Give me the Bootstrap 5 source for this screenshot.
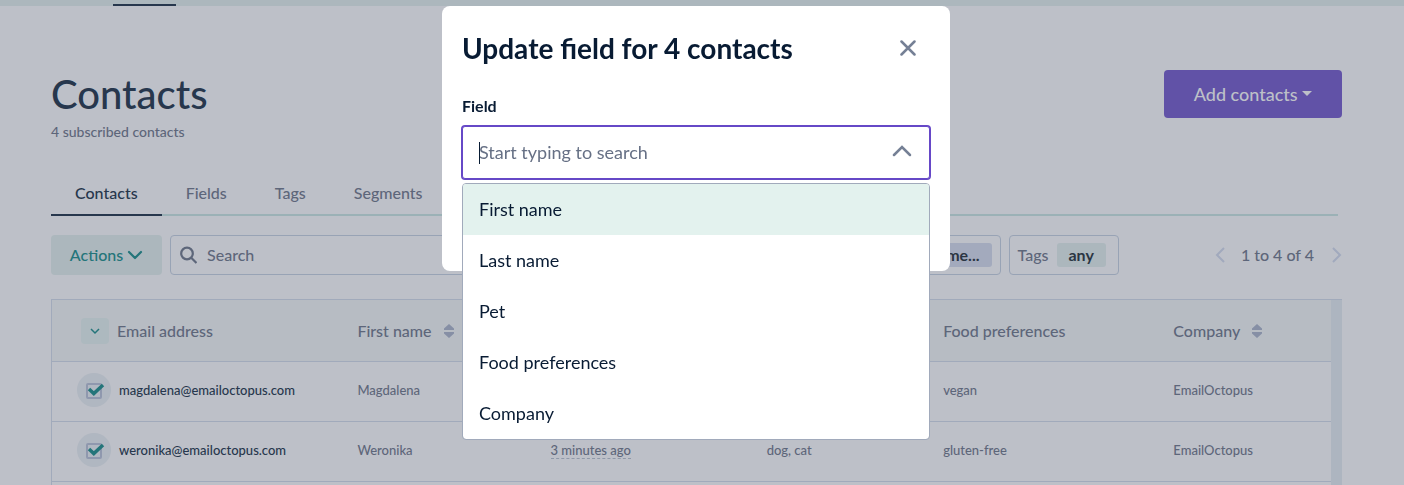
<!DOCTYPE html>
<html lang="en">
<head>
<meta charset="utf-8">
<meta name="viewport" content="width=device-width, initial-scale=1">
<title>Contacts</title>
<link rel="stylesheet" href="https://cdn.jsdelivr.net/npm/bootstrap@5.3.0/dist/css/bootstrap.min.css">
<style>
  :root {
    --page: #bdc0c8; --ink: #27374d; --soft: #5d667a; --rule: #a1aabb;
    --mint: #acb7bd; --teal: #24757a; --navy: #081b33; --violet: #6648c7;
  }
  body { font-family: Lato, "Liberation Sans", sans-serif; font-size: 16px; line-height: 24px; color: var(--soft); background: var(--page); }
  .top-strip { height: 6px; background: var(--mint); padding-left: 113px; }
  .top-strip a { width: 63px; height: 2px; background: var(--ink); }
  .page-main { padding: 64px 62px 0 51px; }
  h1 { font-size: 40px; line-height: 48px; font-weight: 500; color: var(--ink); }
  .sub-count { font-size: 14px; line-height: 28px; font-weight: 500; }
  .btn-add { height: 48px; width: 178px; background: #6152a7; border: 0; border-radius: 4px; color: #bdc0c8; font-size: 18px; font-weight: 500; }
  .btn-add:hover { background: #6152a7; color: #bdc0c8; }
  .tab-row { margin-top: 26px; border-bottom: 2px solid #9bb1b6; font-weight: 500; }
  .tab-row .nav-link { padding: 9px 24px; margin-bottom: -2px; color: var(--soft); border-bottom: 2px solid transparent; line-height: 24px; }
  .tab-row .nav-link.active { color: var(--ink); border-color: var(--ink); }
  .tool-row { margin-top: 19px; font-weight: 500; }
  .btn-actions { width: 111px; height: 40px; padding: 0; border: 0; border-radius: 4px; background: var(--mint); color: var(--teal); font-weight: 500; }
  .filter-box { height: 40px; border: 1px solid #98a3b5; border-radius: 4px; }
  .filter-box input { border: 0; background: none; outline: 0; color: var(--soft); min-width: 0; font-weight: 500; }
  .filter-box input::placeholder { color: var(--soft); opacity: 1; }
  .segment-filter { width: 240px; }
  .chip { height: 24px; border-radius: 3px; font-weight: 700; color: #2b3543; background: var(--mint); }
  .chip-blue { background: #a3aabd; padding-right: 12px; }
  .pager { margin-left: 88px; }
  .pager button { border: 0; background: none; padding: 0; line-height: 0; }
  .grid-box { margin-top: 24px; min-height: 186px; border-left: 1px solid var(--rule); }
  .grid-box table { table-layout: fixed; color: inherit; }
  .grid-box th { height: 62px; padding: 0 0 0 24px; font-weight: 500; background: #b7bcc3; border-top: 1px solid var(--rule); border-bottom: 1px solid var(--rule); }
  .grid-box td { height: 60px; padding: 0 0 4px 24px; font-size: 13px; font-weight: 500; border-bottom: 1px solid var(--rule); }
  .gutter { flex: 0 0 11px; background: #adb5c0; border-top: 1px solid var(--rule); }
  .pick-all { width: 28px; height: 26px; border: 0; padding: 0; border-radius: 4px; background: #adb9bf; margin-left: 4px; line-height: 0; }
  .pick { appearance: none; width: 34px; height: 34px; margin: 0; border-radius: 50%; background: #b0b7c1 url("data:image/svg+xml,%3Csvg xmlns='http://www.w3.org/2000/svg' viewBox='0 0 34 34'%3E%3Crect x='10' y='11' width='14' height='14' rx='1' fill='none' stroke='%238f98ae' stroke-width='2'/%3E%3Cpath d='M12 16l4.800 4.500L26 12' fill='none' stroke='%2324757a' stroke-width='3.500'/%3E%3C/svg%3E"); }
  .cell-first.cell-first { padding-left: 25px; }
  .mail-link { color: var(--ink); text-decoration: none; }
  .ago { border-bottom: 1px dashed #8f98a8; line-height: 16px; }
  .modal { padding-right: 12px; overflow: visible; }
  .modal-dialog { max-width: 508px; margin: 6px auto 0; }
  .modal-content { border: 0; border-radius: 8px; padding: 20px; height: 265px; color: var(--navy); }
  .modal-title { font-size: 28px; line-height: 44px; font-weight: 700; }
  .close-x { border: 0; background: none; padding: 0 14px 0 0; line-height: 0; }
  .field-label { font-weight: 700; margin-top: 24px; margin-bottom: 8px; }
  .combo input { height: 53px; padding: 0 48px 2px 16px; font-size: 18px; border: 1px solid var(--violet); border-radius: 3px; box-shadow: 0 0 0 1px var(--violet); }
  .combo input::placeholder { color: #667085; opacity: 1; }
  .combo-arrow { right: 18px; top: 18px; line-height: 0; }
  .caret-line { left: 17px; top: 16px; width: 1px; height: 22px; background: var(--navy); }
  .combo-list { top: 57px; left: 0; padding: 0; font-size: 18px; border: 1px solid #a1aabb; border-radius: 4px; overflow: hidden; }
  .combo-list .dropdown-item { height: 51px; padding: 12px 16px; line-height: 27px; color: var(--navy); }
  .combo-list .dropdown-item.active { background: #e3f2ee; }
</style>
</head>
<body>
<nav class="top-strip d-flex align-items-end" aria-label="Main"><a href="#" aria-label="Lists"></a></nav>
<main class="page-main">
  <header class="d-flex justify-content-between align-items-start">
    <div>
      <h1 class="m-0">Contacts</h1>
      <div class="sub-count">4 subscribed contacts</div>
    </div>
    <button type="button" class="btn btn-add dropdown-toggle">Add contacts</button>
  </header>

  <nav class="nav tab-row me-1">
    <a class="nav-link active" href="#">Contacts</a>
    <a class="nav-link" href="#">Fields</a>
    <a class="nav-link" href="#">Tags</a>
    <a class="nav-link" href="#">Segments</a>
  </nav>

  <div class="tool-row d-flex align-items-center gap-2">
    <button type="button" class="btn-actions d-flex align-items-center justify-content-center gap-1">Actions
      <svg width="16" height="16" viewBox="0 0 16 16" fill="none" stroke="#24757a" stroke-width="2.200" stroke-linecap="round" stroke-linejoin="round"><path d="M2 5l6 6 6-6"/></svg>
    </button>
    <label class="filter-box d-flex align-items-center flex-grow-1 gap-2 px-2">
      <svg class="me-n1" width="18" height="18" viewBox="0 0 18 18" fill="none" stroke="#5d667a" stroke-width="2.200"><circle cx="8" cy="7.500" r="5.800"/><path d="M12 11.500l5.500 5.500"/></svg>
      <input type="search" placeholder="Search" aria-label="Search">
    </label>
    <div class="filter-box segment-filter d-flex align-items-center px-2">
      <span class="chip chip-blue flex-grow-1 text-end">me...</span>
    </div>
    <div class="filter-box d-flex align-items-center gap-2 px-2">
      <span>Tags</span><span class="chip px-2 me-1"><span class="px-1">any</span></span>
    </div>
    <div class="pager d-flex align-items-center gap-3">
      <button type="button" aria-label="Previous page"><svg width="10" height="16" viewBox="0 0 10 16" fill="none" stroke="#a1a9bd" stroke-width="2"><path d="M9 1L2 8l7 7"/></svg></button>
      <span>1 to 4 of 4</span>
      <button type="button" aria-label="Next page"><svg width="12" height="16" viewBox="0 0 12 16" fill="none" stroke="#a1a9bd" stroke-width="2"><path d="M3 1l7 7-7 7"/></svg></button>
    </div>
  </div>

  <div class="grid-box d-flex align-items-stretch">
    <div class="flex-grow-1">
    <table class="w-100">
      <colgroup><col style="width:22%"><col style="width:15.1%"><col style="width:16.9%"><col style="width:13.8%"><col style="width:18%"><col></colgroup>
      <thead>
        <tr>
          <th class="cell-first"><div class="d-flex align-items-center gap-2">
            <button type="button" class="pick-all" aria-label="Select contacts"><svg width="10" height="8" viewBox="0 0 10 8" fill="none" stroke="#24757a" stroke-width="1.500"><path d="M1 2l4 4 4-4"/></svg></button>Email address</div></th>
          <th><div class="d-flex align-items-center">First name<svg class="ms-2 ps-1" width="14" height="14" viewBox="0 0 10 14" fill="#868fa5"><path d="M5 0L10 4.500V6H0V4.500zM5 14L10 9.500V8H0V9.500z"/></svg></div></th>
          <th></th>
          <th></th>
          <th>Food preferences</th>
          <th><div class="d-flex align-items-center">Company<svg class="ms-2 ps-1" width="14" height="14" viewBox="0 0 10 14" fill="#868fa5"><path d="M5 0L10 4.500V6H0V4.500zM5 14L10 9.500V8H0V9.500z"/></svg></div></th>
        </tr>
      </thead>
      <tbody>
        <tr>
          <td class="cell-first"><div class="d-flex align-items-center gap-2"><input class="pick" type="checkbox" checked aria-label="Select Magdalena"><a class="mail-link" href="#">magdalena@emailoctopus.com</a></div></td>
          <td>Magdalena</td><td></td><td></td><td>vegan</td><td>EmailOctopus</td>
        </tr>
        <tr>
          <td class="cell-first"><div class="d-flex align-items-center gap-2"><input class="pick" type="checkbox" checked aria-label="Select Weronika"><a class="mail-link" href="#">weronika@emailoctopus.com</a></div></td>
          <td>Weronika</td><td><span class="ago">3 minutes ago</span></td><td>dog, cat</td><td>gluten-free</td><td>EmailOctopus</td>
        </tr>
      </tbody>
    </table>
    </div>
    <div class="gutter"></div>
  </div>
</main>

<div class="modal d-block" role="dialog" aria-labelledby="dialogTitle">
  <div class="modal-dialog">
    <div class="modal-content">
      <div class="d-flex align-items-center justify-content-between">
        <h2 class="modal-title" id="dialogTitle">Update field for 4 contacts</h2>
        <button type="button" class="close-x" aria-label="Close"><svg width="16" height="16" viewBox="0 0 16 16" stroke="#758095" stroke-width="2.500" stroke-linecap="round"><path d="M1.500 1.500l13 13M14.500 1.500l-13 13"/></svg></button>
      </div>
      <label class="field-label" for="fieldSearch">Field</label>
      <div class="combo position-relative">
        <input class="w-100" id="fieldSearch" type="text" placeholder="Start typing to search">
        <span class="caret-line position-absolute"></span>
        <span class="combo-arrow position-absolute"><svg width="20" height="14" viewBox="0 0 20 14" fill="none" stroke="#758095" stroke-width="2.500" stroke-linecap="round"><path d="M2 11l8-8 8 8"/></svg></span>
        <div class="dropdown-menu show combo-list w-100">
          <a class="dropdown-item active" href="#">First name</a>
          <a class="dropdown-item" href="#">Last name</a>
          <a class="dropdown-item" href="#">Pet</a>
          <a class="dropdown-item" href="#">Food preferences</a>
          <a class="dropdown-item" href="#">Company</a>
        </div>
      </div>
    </div>
  </div>
</div>
<script src="https://cdn.jsdelivr.net/npm/bootstrap@5.3.0/dist/js/bootstrap.bundle.min.js"></script>
</body>
</html>
